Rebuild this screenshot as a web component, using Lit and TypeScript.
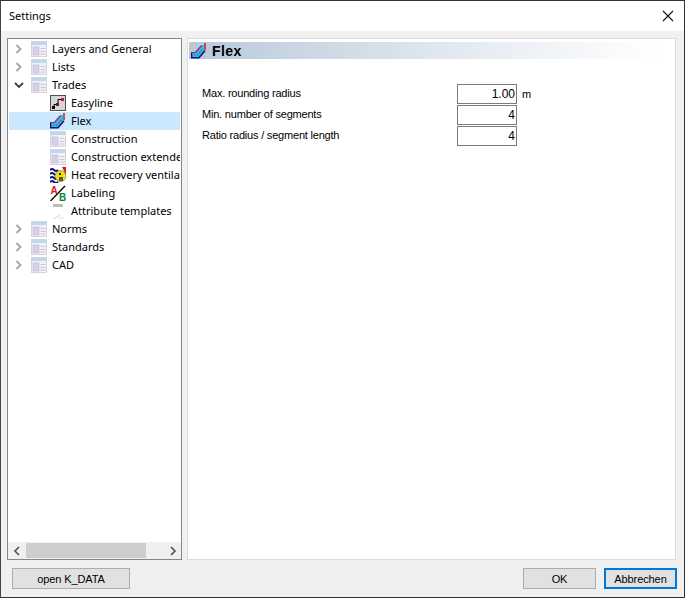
import { LitElement, html, css, svg } from "lit";
import { customElement } from "lit/decorators.js";

type Kind = "page" | "easy" | "flex" | "heat" | "label" | "attr";
interface Row { text: string; icon: Kind; level: 0 | 1; chev?: "closed" | "open"; selected?: boolean }

const rows: Row[] = [
  { text: "Layers and General", icon: "page", level: 0, chev: "closed" },
  { text: "Lists", icon: "page", level: 0, chev: "closed" },
  { text: "Trades", icon: "page", level: 0, chev: "open" },
  { text: "Easyline", icon: "easy", level: 1 },
  { text: "Flex", icon: "flex", level: 1, selected: true },
  { text: "Construction", icon: "page", level: 1 },
  { text: "Construction extended", icon: "page", level: 1 },
  { text: "Heat recovery ventilation", icon: "heat", level: 1 },
  { text: "Labeling", icon: "label", level: 1 },
  { text: "Attribute templates", icon: "attr", level: 1 },
  { text: "Norms", icon: "page", level: 0, chev: "closed" },
  { text: "Standards", icon: "page", level: 0, chev: "closed" },
  { text: "CAD", icon: "page", level: 0, chev: "closed" },
];

const shapes: Record<Kind, unknown> = {
  page: svg`
    <rect x="0.5" y="0.5" width="15" height="15" fill="#f1f1f6" stroke="#d2d5de"/>
    <rect x="1" y="1" width="14" height="3" fill="#bcd9f2"/>
    <rect x="2" y="6" width="6" height="8" fill="#d8cfea" stroke="#c0b8d8" stroke-width="0.6"/>
    <path d="M9.5 7.5h5M9.5 10.5h5M9.5 13h5" stroke="#c6cad2" fill="none"/>`,
  easy: svg`
    <rect x="0.5" y="0.5" width="15" height="15" fill="#d6d6d6" stroke="#505050"/>
    <path d="M4 12.5v-3h4v-5h4" stroke="#000" stroke-width="1" fill="none"/>
    <rect x="2" y="11" width="3" height="3" fill="#000"/>
    <rect x="6" y="8" width="3" height="3" fill="#7a1020"/>
    <rect x="11" y="3" width="3" height="3" fill="#d01030"/>`,
  flex: svg`
    <polygon points="1,9 5,9 11,2 13,2 13,8 8,14 1,14" fill="#18c8e0"/>
    <path d="M0 9.5h4.5l6-7" stroke="#c01070" stroke-width="1.2" fill="none"/>
    <path d="M0.5 15v-5M0 14.8h8l6-7" stroke="#10108c" stroke-width="1.6" fill="none"/>
    <path d="M3 12h4l5-6" stroke="#d02090" stroke-width="1.2" fill="none" stroke-dasharray="1.5 1.5"/>
    <path d="M14 0v7" stroke="#e02020" stroke-width="1.6"/>`,
  heat: svg`
    <path d="M0 3q2-2 4 0t4 0M0 7q2-2 4 0t4 0M0 11q2-2 4 0t4 0M0 15q2-2 4 0t4 0" stroke="#101090" stroke-width="2" fill="none"/>
    <circle cx="10.5" cy="9" r="5.5" fill="#f0e000" stroke="#666" stroke-width="0.6"/>
    <path d="M12 0h4v8z" fill="#c02020"/>
    <rect x="9" y="6" width="2" height="2" fill="#222"/>
    <rect x="9" y="10" width="4" height="4" fill="#555"/>`,
  label: svg`
    <path d="M0.5 16L15 1" stroke="#000" stroke-width="1.3"/>
    <text x="0.5" y="8.5" class="ia">A</text>
    <text x="9" y="16" class="ib">B</text>`,
  attr: svg`
    <rect x="3" y="1" width="10" height="3" fill="#bdbdbd"/>
    <path d="M3 16l7-4" stroke="#d2d2d2" fill="none"/>
    <path d="M9 15h5" stroke="#e0e0e0" fill="none"/>`,
};

function icon(kind: Kind) {
  return html`<svg class="icon" width="16" height="16" viewBox="0 0 16 16">${shapes[kind]}</svg>`;
}

function chevron(c?: "closed" | "open") {
  if (c === "open") return html`<svg class="chev" width="10" height="10" viewBox="0 0 10 10"><path d="M1 3l4 4 4-4" fill="none" stroke="#404040" stroke-width="1.8"/></svg>`;
  if (c === "closed") return html`<svg class="chev" width="10" height="10" viewBox="0 0 10 10"><path d="M2.5 1l4 4-4 4" fill="none" stroke="#a6a6a6" stroke-width="1.8"/></svg>`;
  return html``;
}

@customElement("app-root")
export class AppRoot extends LitElement {
  static styles = css`
    :host {
      display: flex; flex-direction: column; box-sizing: border-box;
      width: 685px; height: 598px; border: 1px solid #333; border-left-color:#444;
      background: #f0f0f0; font-family: "Noto Sans", "Open Sans", sans-serif; font-size: 11px; color: #000;
      overflow: hidden;
    }
    .title { height: 30px; flex: none; background: #fff; display: flex; align-items: center; justify-content: space-between; padding: 0 10px 0 8px; }
    .up { padding-bottom: 2px; }
    .close { display: block; }
    .body { flex: none; display: flex; gap: 5px; padding: 7px 8px 0 6px; height: 522px; }
    .tree { width: 175px; box-sizing: border-box; border: 1px solid #828790; background: #fff; display: flex; flex-direction: column; flex: none; }
    .rows { flex: 1; min-height: 0; padding: 1px 1px 0; overflow: hidden; }
    .row { height: 18px; display: flex; align-items: center; white-space: nowrap; overflow: hidden; }
    .row.sel { background: #cce8ff; }
    .indent { flex: none; display: flex; align-items: center; justify-content: flex-start; box-sizing: border-box; padding-left: 5px; height: 18px; }
    .l0 { width: 22px; }
    .l1 { width: 41px; }
    .icon { flex: none; margin-right: 5px; }
    .ia, .ib { font: bold 10px "Liberation Sans", sans-serif; }
    .ia { fill: #d02020; }
    .ib { fill: #108040; }
    .scroll { flex: none; height: 17px; background: #f0f0f0; display: flex; align-items: center; }
    .sb { flex: none; width: 17px; height: 17px; display: flex; align-items: center; justify-content: center; }
    .track { flex: 1; height: 15px; padding-left: 1px; }
    .thumb { width: 120px; height: 15px; background: #cdcdcd; }
    .panel { flex: 1; box-sizing: border-box; border: 1px solid #dcdcdc; background: #fff; padding: 3px 1px 0; }
    .head { height: 17px; display: flex; align-items: center; gap: 5px; padding-left: 2px;
      background: linear-gradient(90deg, #b9c9da 0%, #d3dde8 35%, #eef2f6 70%, #ffffff 97%); }
    .head b { font: bold 14px "Liberation Sans", sans-serif; letter-spacing: 0.4px; }
    .head .icon { margin-right: 0; }
    .form { display: grid; grid-template-columns: 250px 60px auto; row-gap: 1px; column-gap: 5px; align-items: center;
      margin: 25px 0 0 13px; font-family: "Liberation Sans", sans-serif; letter-spacing: -0.2px; justify-content: start; }
    .in { box-sizing: border-box; height: 20px; border: 1px solid #7a7a7a; background: #fff; text-align: right; line-height: 18px; padding-right: 1px; font-size: 12px; letter-spacing: 0; }
    .foot { flex: none; display: flex; align-items: flex-start; padding: 8px 7px 0 11px; font-family: "Liberation Sans", sans-serif; letter-spacing: -0.1px; }
    .btn { box-sizing: border-box; height: 21px; background: #e1e1e1; border: 1px solid #adadad; display: flex; align-items: center; justify-content: center; }
    .wide { width: 118px; margin-right: auto; }
    .ok { width: 73px; margin-right: 8px; }
    .def { width: 73px; border: 2px solid #0078d7; }
  `;

  render() {
    return html`
      <div class="title"><span class="up">Settings</span>
        <svg class="close" width="12" height="12" viewBox="0 0 12 12"><path d="M1 1l10 10M11 1L1 11" stroke="#111" stroke-width="1.1" fill="none"/></svg>
      </div>
      <div class="body">
        <div class="tree">
          <div class="rows">
            ${rows.map(r => html`
              <div class="row ${r.selected ? "sel" : ""}">
                <span class="indent ${r.level ? "l1" : "l0"}">${chevron(r.chev)}</span>
                ${icon(r.icon)}<span class="up">${r.text}</span>
              </div>`)}
          </div>
          <div class="scroll">
            <span class="sb"><svg width="8" height="10" viewBox="0 0 8 10"><path d="M6 1L2 5l4 4" fill="none" stroke="#505050" stroke-width="1.6"/></svg></span>
            <div class="track"><div class="thumb"></div></div>
            <span class="sb"><svg width="8" height="10" viewBox="0 0 8 10"><path d="M2 1l4 4-4 4" fill="none" stroke="#505050" stroke-width="1.6"/></svg></span>
          </div>
        </div>
        <div class="panel">
          <div class="head">${icon("flex")}<b>Flex</b></div>
          <div class="form">
            <span class="up">Max. rounding radius</span><div class="in">1.00</div><span>m</span>
            <span class="up">Min. number of segments</span><div class="in">4</div><span></span>
            <span class="up">Ratio radius / segment length</span><div class="in">4</div><span></span>
          </div>
        </div>
      </div>
      <div class="foot">
        <div class="btn wide">open K_DATA</div>
        <div class="btn ok">OK</div>
        <div class="btn def">Abbrechen</div>
      </div>
    `;
  }
}
